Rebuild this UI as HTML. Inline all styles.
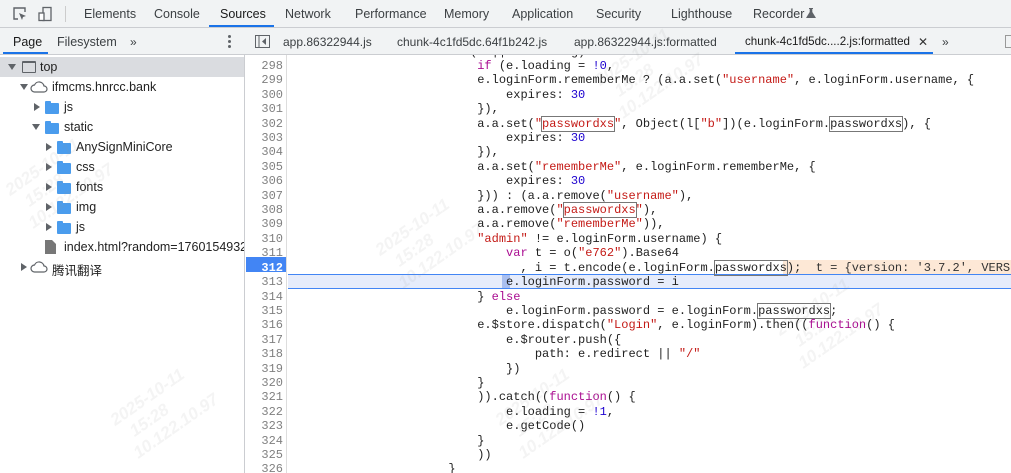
<!DOCTYPE html>
<html><head><meta charset="utf-8"><style>
*{margin:0;padding:0;box-sizing:border-box}
body{width:1011px;height:473px;overflow:hidden;background:#fff;font-family:"Liberation Sans","Noto Sans CJK SC",sans-serif;font-size:12px;color:#333;position:relative}
.abs{position:absolute;white-space:nowrap}
#top{position:absolute;left:0;top:0;width:1011px;height:28px;background:#f1f3f4;border-bottom:1px solid #cbcdd1}
#top span{position:absolute;top:7px;font-size:12.5px;color:#3c4043;white-space:nowrap}
#bar2{position:absolute;left:0;top:28px;width:1011px;height:27px;background:#f1f3f4;border-bottom:1px solid #cbcdd1}
#bar2 span{position:absolute;top:7px;font-size:12px;color:#3c4043;white-space:nowrap}
#left{position:absolute;left:0;top:55px;width:245px;height:418px;background:#fff;border-right:1px solid #cbcdd1;overflow:hidden}
.row{position:absolute;left:0;width:245px;height:20px;font-size:12.5px;color:#222;white-space:nowrap}
.row span{position:absolute;top:3px;white-space:nowrap}
.tri{position:absolute;width:0;height:0}
.tr{border-top:4px solid transparent;border-bottom:4px solid transparent;border-left:6px solid #5f6368}
.td{border-left:4px solid transparent;border-right:4px solid transparent;border-top:6px solid #5f6368}
.fold{position:absolute;width:14px;height:11px;background:#4a9ced;border-radius:1px}
.fold:before{content:"";position:absolute;left:0;top:-2px;width:6px;height:3px;background:#4a9ced;border-radius:1px 1px 0 0}
#gut{position:absolute;left:246px;top:55px;width:41px;height:418px;border-right:1px solid #ddd;background:#fff;overflow:hidden}
#code{position:absolute;left:288px;top:55px;width:723px;height:418px;overflow:hidden}
.ln{position:absolute;right:4px;font-family:"Liberation Mono",monospace;font-size:12px;color:#808080;line-height:14.4px}
pre{font-family:"Liberation Mono",monospace;font-size:12px;line-height:14.4px;color:#222;position:absolute;left:2px;top:-10.4px}
.k{color:#aa0d91}.s{color:#c41a16}.n{color:#1c00cf}
.bx{outline:1px solid #777;outline-offset:0}
.wm{position:absolute;color:rgba(150,150,150,.10);font:bold italic 17px "Liberation Sans",sans-serif;transform:rotate(-35deg);white-space:pre;line-height:20px}
</style></head><body>
<div id="top">
<svg class="abs" style="left:12px;top:6px" width="16" height="16" viewBox="0 0 16 16"><path d="M6 13H2V2h11v4" fill="none" stroke="#5f6368" stroke-width="1.4"/><path d="M7 7l7 3-3 1-1 3z" fill="#5f6368"/></svg>
<svg class="abs" style="left:37px;top:6px" width="16" height="16" viewBox="0 0 16 16"><rect x="6" y="1.5" width="8" height="13" fill="none" stroke="#5f6368" stroke-width="1.3"/><rect x="2" y="7" width="5" height="7.5" fill="#fff" stroke="#5f6368" stroke-width="1.3"/></svg>
<div class="abs" style="left:65px;top:6px;width:1px;height:16px;background:#ccc"></div>
<span style="left:84px">Elements</span><span style="left:154px">Console</span><span style="left:220px;color:#1a1a1a">Sources</span>
<div class="abs" style="left:209px;top:25px;width:65px;height:2px;background:#1a73e8"></div>
<span style="left:285px">Network</span><span style="left:355px">Performance</span><span style="left:444px">Memory</span><span style="left:512px">Application</span><span style="left:596px">Security</span><span style="left:671px">Lighthouse</span><span style="left:753px">Recorder</span>
<svg class="abs" style="left:806px;top:8px" width="10" height="10" viewBox="0 0 10 10"><path d="M3 0h4v1H6.3v3L10 10H0L3.7 4V1H3z" fill="#5f6368"/></svg>
</div>
<div id="bar2">
<span style="left:13px;color:#1a1a1a;font-size:12.5px">Page</span><span style="left:57px;font-size:12.5px">Filesystem</span><span style="left:130px">»</span>
<div class="abs" style="left:3px;top:24px;width:45px;height:2px;background:#1a73e8"></div>
<div class="abs" style="left:228px;top:7px;width:3px;height:3px;background:#5f6368;border-radius:50%;box-shadow:0 5px 0 #5f6368,0 10px 0 #5f6368"></div>
<svg class="abs" style="left:255px;top:7px" width="15" height="13" viewBox="0 0 15 13"><rect x=".5" y=".5" width="14" height="12" fill="none" stroke="#5f6368"/><path d="M4 1v11" stroke="#5f6368"/><path d="M11 3v7L7 6.5z" fill="#5f6368"/></svg>
<span style="left:283px">app.86322944.js</span><span style="left:397px">chunk-4c1fd5dc.64f1b242.js</span><span style="left:574px">app.86322944.js:formatted</span><span style="left:745px;color:#1a1a1a;font-size:11.6px">chunk-4c1fd5dc....2.js:formatted</span><span style="left:918px;color:#333">✕</span><span style="left:942px">»</span>
<div class="abs" style="left:735px;top:24px;width:198px;height:2px;background:#1a73e8"></div>
<div class="abs" style="left:1005px;top:7px;width:8px;height:13px;border:1px solid #999"></div>
</div>
<div id="left">
<div class="row" style="top:2px;background:#dadce0"><div class="tri td" style="left:8px;top:7px"></div><div class="abs" style="left:22px;top:4px;width:14px;height:12px;border:1.5px solid #5f6368;border-top-width:2.5px;border-radius:1px"></div><span style="left:40px">top</span></div>
<div class="row" style="top:22px"><div class="tri td" style="left:20px;top:7px"></div><svg class="abs" style="left:30px;top:4px" width="18" height="12" viewBox="0 0 18 12"><path d="M4.5 11h9.5a3 3 0 0 0 0-6 5 5 0 0 0-9.5-1A3.5 3.5 0 0 0 4.5 11z" fill="none" stroke="#5f6368" stroke-width="1.2"/></svg><span style="left:52px">ifmcms.hnrcc.bank</span></div>
<div class="row" style="top:42px"><div class="tri tr" style="left:34px;top:6px"></div><div class="fold" style="left:45px;top:6px"></div><span style="left:64px">js</span></div>
<div class="row" style="top:62px"><div class="tri td" style="left:32px;top:7px"></div><div class="fold" style="left:45px;top:6px"></div><span style="left:64px">static</span></div>
<div class="row" style="top:82px"><div class="tri tr" style="left:46px;top:6px"></div><div class="fold" style="left:57px;top:6px"></div><span style="left:76px">AnySignMiniCore</span></div>
<div class="row" style="top:102px"><div class="tri tr" style="left:46px;top:6px"></div><div class="fold" style="left:57px;top:6px"></div><span style="left:76px">css</span></div>
<div class="row" style="top:122px"><div class="tri tr" style="left:46px;top:6px"></div><div class="fold" style="left:57px;top:6px"></div><span style="left:76px">fonts</span></div>
<div class="row" style="top:142px"><div class="tri tr" style="left:46px;top:6px"></div><div class="fold" style="left:57px;top:6px"></div><span style="left:76px">img</span></div>
<div class="row" style="top:162px"><div class="tri tr" style="left:46px;top:6px"></div><div class="fold" style="left:57px;top:6px"></div><span style="left:76px">js</span></div>
<div class="row" style="top:182px"><svg class="abs" style="left:45px;top:3px" width="11" height="14" viewBox="0 0 11 14"><path d="M0 0h7l4 4v10H0z" fill="#777"/></svg><span style="left:64px">index.html?random=17601549324</span></div>
<div class="row" style="top:202px"><div class="tri tr" style="left:21px;top:6px"></div><svg class="abs" style="left:30px;top:4px" width="18" height="12" viewBox="0 0 18 12"><path d="M4.5 11h9.5a3 3 0 0 0 0-6 5 5 0 0 0-9.5-1A3.5 3.5 0 0 0 4.5 11z" fill="none" stroke="#5f6368" stroke-width="1.2"/></svg><span style="left:52px">腾讯翻译</span></div>
</div>
<div id="gut">
<div class="abs" style="left:0;top:202px;width:40px;height:15px;background:#4285f4"></div>
<svg class="abs" style="left:40px;top:202px" width="5" height="15"><path d="M0 0l4 7.5L0 15z" fill="#4285f4"/></svg>
<div class="ln" style="top:-10.4px;text-align:right;width:37px;left:0">297<br>298<br>299<br>300<br>301<br>302<br>303<br>304<br>305<br>306<br>307<br>308<br>309<br>310<br>311<br><b style="color:#fff">312</b><br>313<br>314<br>315<br>316<br>317<br>318<br>319<br>320<br>321<br>322<br>323<br>324<br>325<br>326</div>
</div>
<div id="code">
<div class="abs" style="left:0;top:219px;width:723px;height:15px;background:#e6ecfb;border-top:1px solid #4285f4;border-bottom:1px solid #4285f4"></div>
<div class="abs" style="left:214px;top:220px;width:8px;height:13px;background:#a9bff0"></div>
<div class="abs" style="left:495px;top:205px;width:228px;height:14px;background:#fde8d6"></div>
<pre>                      <span class="k">if</span> (e || e.loading)
                          <span class="k">if</span> (e.loading = <span class="n">!0</span>,
                          e.loginForm.rememberMe ? (a.a.set(<span class="s">"username"</span>, e.loginForm.username, {
                              expires: <span class="n">30</span>
                          }),
                          a.a.set(<span class="s">"<span class="bx">passwordxs</span>"</span>, Object(l[<span class="s">"b"</span>])(e.loginForm.<span class="bx">passwordxs</span>), {
                              expires: <span class="n">30</span>
                          }),
                          a.a.set(<span class="s">"rememberMe"</span>, e.loginForm.rememberMe, {
                              expires: <span class="n">30</span>
                          })) : (a.a.remove(<span class="s">"username"</span>),
                          a.a.remove(<span class="s">"<span class="bx">passwordxs</span>"</span>),
                          a.a.remove(<span class="s">"rememberMe"</span>)),
                          <span class="s">"admin"</span> != e.loginForm.username) {
                              <span class="k">var</span> t = o(<span class="s">"e762"</span>).Base64
                                , i = t.encode(e.loginForm.<span class="bx">passwordxs</span>);  <span style="color:#333">t = {version: '3.7.2', VERSION: '3.7.2'</span>
                              e.loginForm.password = i
                          } <span class="k">else</span>
                              e.loginForm.password = e.loginForm.<span class="bx">passwordxs</span>;
                          e.$store.dispatch(<span class="s">"Login"</span>, e.loginForm).then((<span class="k">function</span>() {
                              e.$router.push({
                                  path: e.redirect || <span class="s">"/"</span>
                              })
                          }
                          )).catch((<span class="k">function</span>() {
                              e.loading = <span class="n">!1</span>,
                              e.getCode()
                          }
                          ))
                      }</pre>
</div>
<div class="wm" style="left:10px;top:150px">2025-10-11
  15:28
10.122.10.97</div>
<div class="wm" style="left:380px;top:210px">2025-10-11
  15:28
10.122.10.97</div>
<div class="wm" style="left:600px;top:40px">2025-10-11
  15:28
10.122.10.97</div>
<div class="wm" style="left:115px;top:380px">2025-10-11
  15:28
10.122.10.97</div>
<div class="wm" style="left:500px;top:380px">2025-10-11
  15:28
10.122.10.97</div>
<div class="wm" style="left:780px;top:290px">2025-10-11
  15:28
10.122.10.97</div>
</body></html>
